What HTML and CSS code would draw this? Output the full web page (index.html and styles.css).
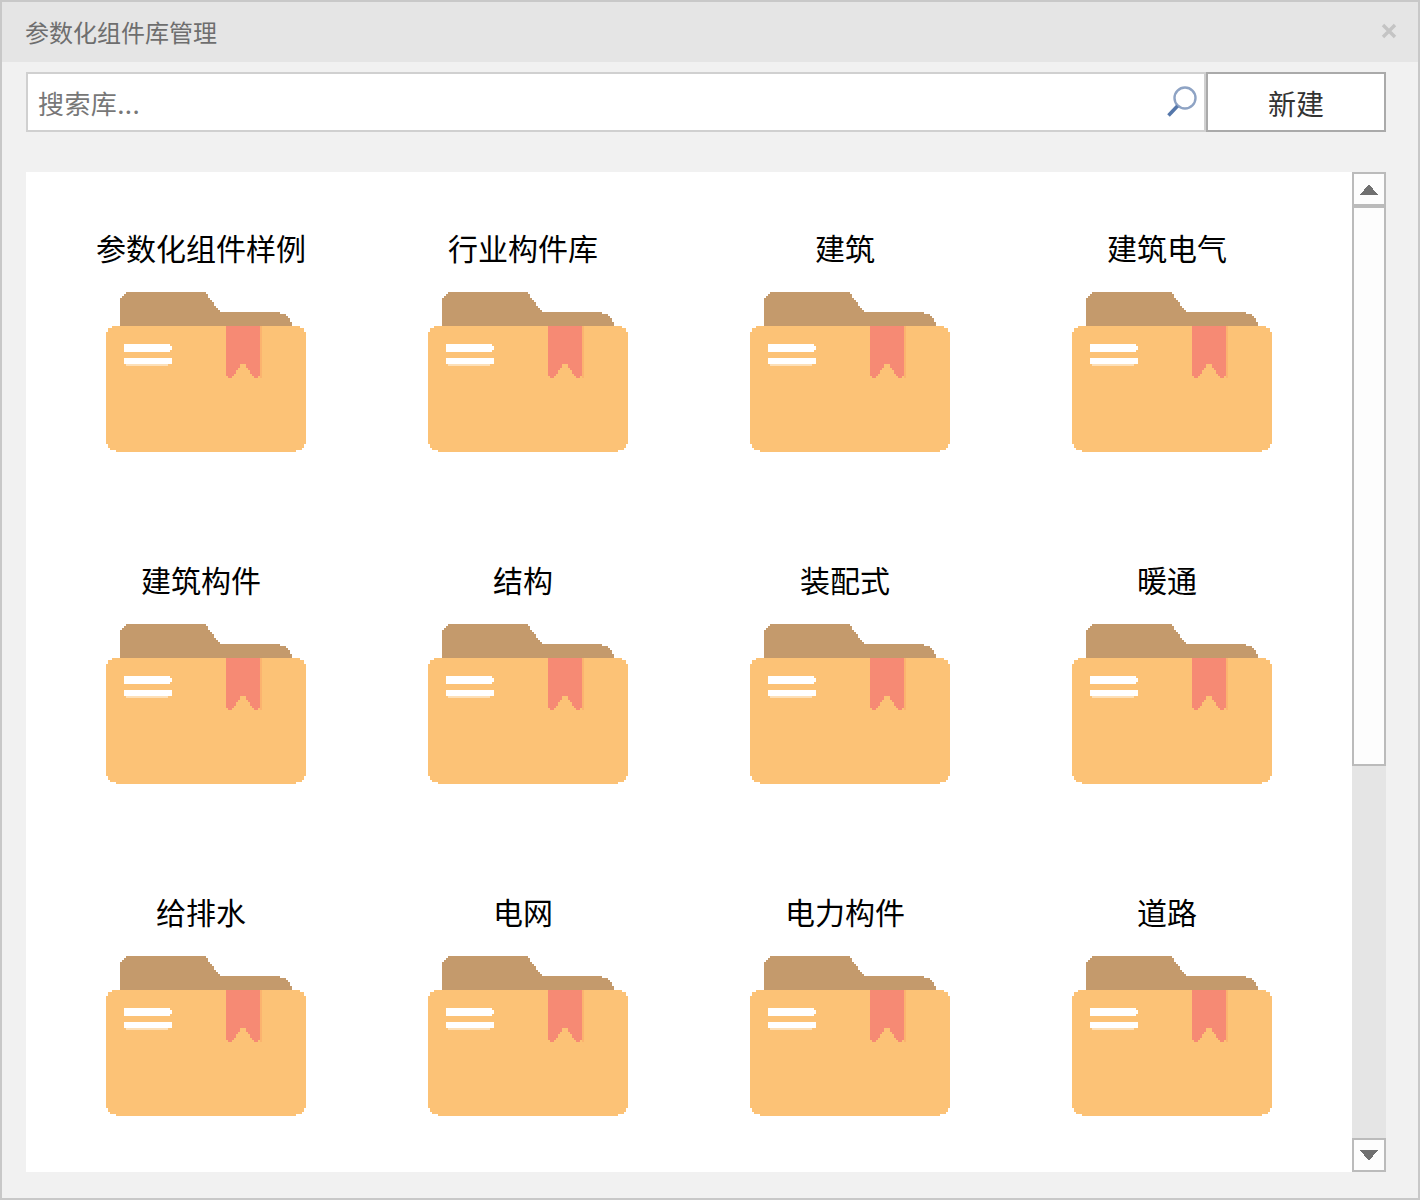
FILE: index.html
```html
<!DOCTYPE html>
<html lang="zh-CN">
<head>
<meta charset="utf-8">
<title>参数化组件库管理</title>
<link rel="stylesheet" href="styles.css">
</head>
<body>
<svg class="defs" width="0" height="0" aria-hidden="true">
  <symbol id="folder" viewBox="0 0 200 160">
    <path fill="#c49a6c" d="M20 0H100V2H102V6H104V8H106V10H108V14H110V16H112V18H114V20H174V22H180V24H182V26H184V30H186V34H14V6H16V4H18V2H20Z"/>
    <path fill="#fcc276" d="M6 34H194V36H198V40H200V152H198V156H196V158H190V160H10V158H4V156H2V152H0V40H2V36H6Z"/>
    <rect fill="#fbb36f" x="154" y="34" width="2" height="52"/>
    <path fill="#f68a74" d="M120 34H154V84H152V86H148V84H146V82H144V78H142V76H140V72H134V76H132V78H130V82H128V84H126V86H122V84H120Z"/>
    <path fill="#fff" d="M18 52H64V54H66V58H64V60H18Z"/>
    <path fill="#fff" d="M18 66H66V72H18Z"/>
    <rect fill="#fde0b8" x="20" y="72" width="42" height="2"/>
  </symbol>
</svg>
<div class="window">
  <header class="titlebar">
    <span class="title">参数化组件库管理</span>
    <svg class="close" width="16" height="16" viewBox="0 0 16 16"><path d="M2 2L14 14M14 2L2 14" stroke="#c4c4c4" stroke-width="3.4" fill="none"/></svg>
  </header>
  <div class="toolbar">
    <div class="search">
      <input class="search-input" type="text" placeholder="搜索库...">
      <svg class="search-icon" width="32" height="36" viewBox="0 0 32 36">
        <circle cx="19" cy="14" r="10.5" fill="none" stroke="#8ea3c4" stroke-width="2.4"/>
        <path d="M11.5 22L2.5 31.5" stroke="#5577aa" stroke-width="3.6" fill="none"/>
      </svg>
    </div>
    <button class="new-btn" type="button">新建</button>
  </div>
  <main class="content">
    <div class="panel">
      <div class="grid">
        <div class="card"><div class="label">参数化组件样例</div><svg class="folder"><use href="#folder"/></svg></div>
        <div class="card"><div class="label">行业构件库</div><svg class="folder"><use href="#folder"/></svg></div>
        <div class="card"><div class="label">建筑</div><svg class="folder"><use href="#folder"/></svg></div>
        <div class="card"><div class="label">建筑电气</div><svg class="folder"><use href="#folder"/></svg></div>
        <div class="card"><div class="label">建筑构件</div><svg class="folder"><use href="#folder"/></svg></div>
        <div class="card"><div class="label">结构</div><svg class="folder"><use href="#folder"/></svg></div>
        <div class="card"><div class="label">装配式</div><svg class="folder"><use href="#folder"/></svg></div>
        <div class="card"><div class="label">暖通</div><svg class="folder"><use href="#folder"/></svg></div>
        <div class="card"><div class="label">给排水</div><svg class="folder"><use href="#folder"/></svg></div>
        <div class="card"><div class="label">电网</div><svg class="folder"><use href="#folder"/></svg></div>
        <div class="card"><div class="label">电力构件</div><svg class="folder"><use href="#folder"/></svg></div>
        <div class="card"><div class="label">道路</div><svg class="folder"><use href="#folder"/></svg></div>
      </div>
    </div>
    <div class="scrollbar">
      <div class="scroll-btn"><svg width="18" height="11" viewBox="0 0 18 11"><path d="M9 0L18 11H0Z" fill="#707070"/></svg></div>
      <div class="scroll-track"><div class="scroll-thumb"></div></div>
      <div class="scroll-btn"><svg width="18" height="11" viewBox="0 0 18 11"><path d="M0 0H18L9 11Z" fill="#707070"/></svg></div>
    </div>
  </main>
</div>
</body>
</html>
```
FILE: styles.css
```css
* { box-sizing: border-box; }
html, body { margin: 0; padding: 0; }
body { font-family: "Noto Sans CJK SC", "Liberation Sans", sans-serif; background: #f0f0f0; }
.defs { position: absolute; }
.window {
  width: 1420px;
  height: 1200px;
  border: 2px solid #c8c8c8;
  background: #f1f1f1;
  display: flex;
  flex-direction: column;
  overflow: hidden;
}
.titlebar {
  height: 60px;
  flex: none;
  background: #e5e5e5;
  display: flex;
  align-items: center;
  justify-content: space-between;
  padding: 0 21px 0 23px;
}
.title { font-size: 24px; line-height: 32px; color: #6e6e6e; }
.close { flex: none; margin-top: -2px; }
.toolbar {
  flex: none;
  display: flex;
  height: 60px;
  margin: 10px 32px 0 24px;
}
.search {
  flex: 1;
  display: flex;
  align-items: center;
  background: #fff;
  border: 2px solid #d0d0d0;
  padding-right: 6px;
}
.search-input {
  flex: 1;
  min-width: 0;
  height: 100%;
  border: 0;
  outline: 0;
  background: transparent;
  padding: 0 0 0 10px;
  font: 26px "Noto Sans CJK SC", sans-serif;
  letter-spacing: 0.4px;
  color: #777;
}
.search-input::placeholder { color: #777; opacity: 1; }
.search-icon { flex: none; }
.new-btn {
  flex: none;
  width: 180px;
  height: 60px;
  background: #fff;
  border: 2px solid #aaa;
  font: 28px "Noto Sans CJK SC", sans-serif;
  color: #333;
  padding: 2px 0 0;
  margin: 0;
}
.content {
  flex: none;
  display: flex;
  height: 1000px;
  margin: 40px 32px 0 24px;
}
.panel { flex: 1; background: #fff; overflow: hidden; padding: 55px 0 0 14px; }
.grid {
  display: grid;
  grid-template-columns: repeat(4, 322px);
  grid-auto-rows: 332px;
}
.card { display: flex; flex-direction: column; align-items: center; }
.label { font-size: 30px; line-height: 40px; color: #000; white-space: nowrap; }
.folder { display: block; width: 200px; height: 160px; margin: 25px 0 0 10px; shape-rendering: crispEdges; }
.scrollbar { flex: none; width: 34px; display: flex; flex-direction: column; }
.scroll-btn {
  flex: none;
  height: 34px;
  border: 2px solid #bbb;
  background: #fdfdfd;
  display: flex;
  align-items: center;
  justify-content: center;
}
.scroll-btn svg { display: block; shape-rendering: crispEdges; }
.scroll-track { flex: 1; background: #e5e5e5; }
.scroll-thumb { height: 560px; background: #fdfdfd; border: 2px solid #bbb; }
```
